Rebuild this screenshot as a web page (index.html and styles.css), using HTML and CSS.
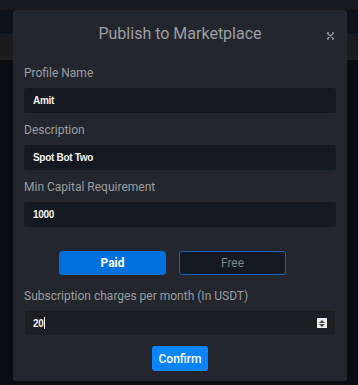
FILE: index.html
```html
<!DOCTYPE html>
<html lang="en">
<head>
  <meta charset="UTF-8">
  <meta name="viewport" content="width=device-width, initial-scale=1.0">
  <title>Publish to Marketplace</title>
  <link rel="stylesheet" href="styles.css">
</head>
<body>
  <div class="backdrop">
    <div class="band band-top"></div>
    <div class="band band-nav"></div>
    <div class="band band-sub"></div>
  </div>

  <div class="modal">
    <div class="modal-head">
      <span></span>
      <h2>Publish to Marketplace</h2>
      <button class="close" aria-label="Close">
        <svg width="9" height="8" viewBox="0 0 9 8"><path d="M1 1 L8 7 M8 1 L1 7 M1 1 L3 1 M8 1 L6 1 M1 7 L3 7 M8 7 L6 7" stroke="#8d9096" stroke-width="1.3" fill="none"/></svg>
      </button>
    </div>

    <div class="field">
      <label>Profile Name</label>
      <div class="input">Amit</div>
    </div>

    <div class="field">
      <label>Description</label>
      <div class="input">Spot Bot Two</div>
    </div>

    <div class="field">
      <label>Min Capital Requirement</label>
      <div class="input">1000</div>
    </div>

    <div class="toggle">
      <button class="opt active">Paid</button>
      <button class="opt">Free</button>
    </div>

    <div class="field field-price">
      <label>Subscription charges per month (In USDT)</label>
      <div class="input input-num">
        <span>20<i class="caret"></i></span>
        <span class="spin"><b class="up"></b><b class="down"></b></span>
      </div>
    </div>

    <div class="actions">
      <button class="confirm">Confirm</button>
    </div>
  </div>
</body>
</html>
```

FILE: styles.css
```css
body { margin: 0; background: #0b0c10; font-family: Roboto, 'Liberation Sans', Arial, sans-serif; width: 358px; height: 385px; overflow: hidden; position: relative; }
.backdrop { position: absolute; left: 0; top: 0; width: 100%; }
.band { width: 100%; }
.band-top { height: 10px; background: #17181d; }
.band-nav { height: 23px; background: #0f1118; border-bottom: 2px solid #121a2a; }
.band-sub { height: 25px; background: #1b1a1d; }

.modal { position: relative; margin: 10px 0 0 13px; width: 334px; box-sizing: border-box; padding: 0 11px 10px; background: #24262d; border-radius: 3px; }
.modal-head { display: grid; grid-template-columns: 20px 1fr 20px; height: 46px; align-items: center; }
.modal-head h2 { margin: 0; text-align: center; font-size: 16px; font-weight: 400; color: #9b9ea3; padding-top: 0; }
.close { background: none; border: none; padding: 0; justify-self: end; margin-top: 5px; margin-right: 1px; display: flex; }

.field { margin-top: 9px; }
.field label { display: block; font-size: 12px; line-height: 16px; color: #9a9da2; margin-bottom: 7px; }
.input { height: 25px; background: #141820; border-radius: 3px; display: flex; align-items: center; padding: 0 9px; font-family: 'Liberation Sans', Arial, sans-serif; font-weight: bold; font-size: 10px; color: #f2f2f2; letter-spacing: -0.3px; }

.toggle { display: flex; gap: 13px; margin-top: 24px; padding-left: 35px; }
.opt { width: 107px; height: 24px; border-radius: 3px; font-family: Roboto, 'Liberation Sans', Arial, sans-serif; font-size: 12px; cursor: pointer; background: #141820; border: 1px solid #1762c0; color: #7f8288; }
.opt.active { background: #0070dd; border-color: #0070dd; color: #fff; font-weight: bold; }

.field-price { margin-top: 13px; }
.input-num { height: 24px; background: #1c1e21; justify-content: space-between; margin: 0 1px; padding-left: 8px; padding-right: 8px; }
.caret { display: inline-block; width: 1px; height: 12px; background: #fff; vertical-align: -2px; }
.spin { width: 10px; height: 10px; background: #eeeeee; display: flex; flex-direction: column; align-items: center; justify-content: center; gap: 1px; }
.spin b { width: 0; height: 0; border-left: 3px solid transparent; border-right: 3px solid transparent; }
.spin .up { border-bottom: 3px solid #444; }
.spin .down { border-top: 3px solid #444; }

.actions { display: flex; justify-content: center; margin-top: 11px; }
.confirm { width: 56px; height: 25px; background: #0a84ff; color: #fff; border: none; border-radius: 3px; font-family: Roboto, 'Liberation Sans', Arial, sans-serif; font-size: 12px; font-weight: 500; padding: 0; cursor: pointer; }
```
